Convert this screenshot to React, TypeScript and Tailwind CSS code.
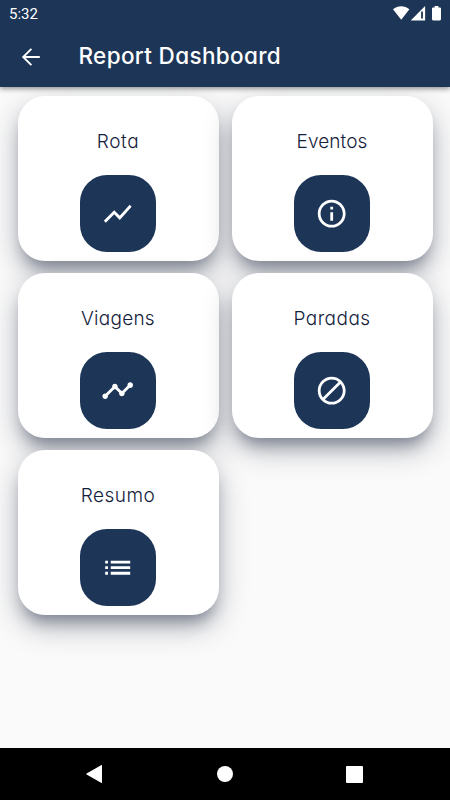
import type { IconType } from 'react-icons';
import {
  MdDoNotDisturbAlt,
  MdInfoOutline,
  MdList,
  MdShowChart,
  MdTimeline,
} from 'react-icons/md';

interface Report {
  label: string;
  icon: IconType;
  labelClass: string;
}

const reports: Report[] = [
  { label: 'Rota', icon: MdShowChart, labelClass: 'tracking-[0.6px]' },
  { label: 'Eventos', icon: MdInfoOutline, labelClass: 'tracking-[0.1px]' },
  { label: 'Viagens', icon: MdTimeline, labelClass: 'tracking-[0.25px]' },
  { label: 'Paradas', icon: MdDoNotDisturbAlt, labelClass: 'tracking-[0.45px]' },
  { label: 'Resumo', icon: MdList, labelClass: 'tracking-[0.5px]' },
];

const StatusBar = () => (
  <div className="flex h-7 items-center justify-between pl-[9px] pr-2 font-[Roboto,sans-serif] text-[15px] text-white">
    <span className="leading-7">5:32</span>
    <svg width="50" height="16" viewBox="0 0 50 16" fill="currentColor">
      {/* wifi */}
      <path d="M1 3.2C5.8-.9 12.6-.9 17.4 3.2L9.2 13.8z" />
      {/* signal */}
      <path d="M33.1 0V14.4H18.7z" />
      <path d="M29.1 5.6h1.8v7h-1.8z" fill="#1d3557" />
      {/* battery */}
      <path d="M42.6 0h3.8v1.4h1.5q1.1 0 1.1 1.1v10.8q0 1.1-1.1 1.1h-6.8q-1.1 0-1.1-1.1V2.5q0-1.1 1.1-1.1h1.5z" />
    </svg>
  </div>
);

const ReportCard = ({ label, icon: Icon, labelClass }: Report) => (
  <button
    type="button"
    className="flex h-[164.5px] flex-col items-center rounded-[27px] bg-white pt-8 shadow-[0_12px_14px_-6px_rgba(29,39,62,0.36),0_12px_28px_rgba(29,39,62,0.34)]"
  >
    <span className={`text-[19px] font-light leading-7 text-[#14213d] ${labelClass}`}>{label}</span>
    <span className="mt-[19px] flex size-[76.5px] items-center justify-center rounded-[27px] bg-[#1d3557] text-white">
      <Icon size={33.4} />
    </span>
  </button>
);

const NavigationBar = () => (
  <nav className="flex h-[52px] items-center justify-between bg-black pl-[84.5px] pr-[87px] text-white">
    <svg width="18" height="20" viewBox="0 0 18 20" fill="currentColor">
      <path d="M17 1.2v17.6q0 .5-.5.2L1.6 10.5q-.8-.5 0-1L16.5 1q.5-.3.5.2z" />
    </svg>
    <span className="ml-0.5 size-4 rounded-full bg-white" />
    <span className="size-[17px] rounded-[1px] bg-white" />
  </nav>
);

export default function App() {
  return (
    <div className="flex h-[800px] w-[450px] flex-col overflow-hidden bg-[#fafafa] font-[Inter,sans-serif] [font-feature-settings:'cv11']">
      <header className="z-10 h-[87px] bg-[#1d3557] shadow-[0_2px_5px_rgba(0,0,0,0.4)]">
        <StatusBar />
        <div className="flex h-[55px] items-center pl-[21px] text-white">
          <svg
            className="mt-[3px]"
            width="20"
            height="20"
            viewBox="0 0 20 20"
            fill="none"
            stroke="currentColor"
            strokeWidth="1.9"
          >
            <path d="M18.8 10H2.6M10.4 1.8L2.2 10l8.2 8.2" />
          </svg>
          <h1 className="ml-[37.5px] text-[22.5px] font-[450] tracking-[0.34px]">Report Dashboard</h1>
        </div>
      </header>

      <main className="grid flex-1 grid-cols-2 content-start gap-x-[13px] gap-y-[12.7px] px-[17.5px] pt-[9px]">
        {reports.map((report) => (
          <ReportCard key={report.label} {...report} />
        ))}
      </main>

      <NavigationBar />
    </div>
  );
}
